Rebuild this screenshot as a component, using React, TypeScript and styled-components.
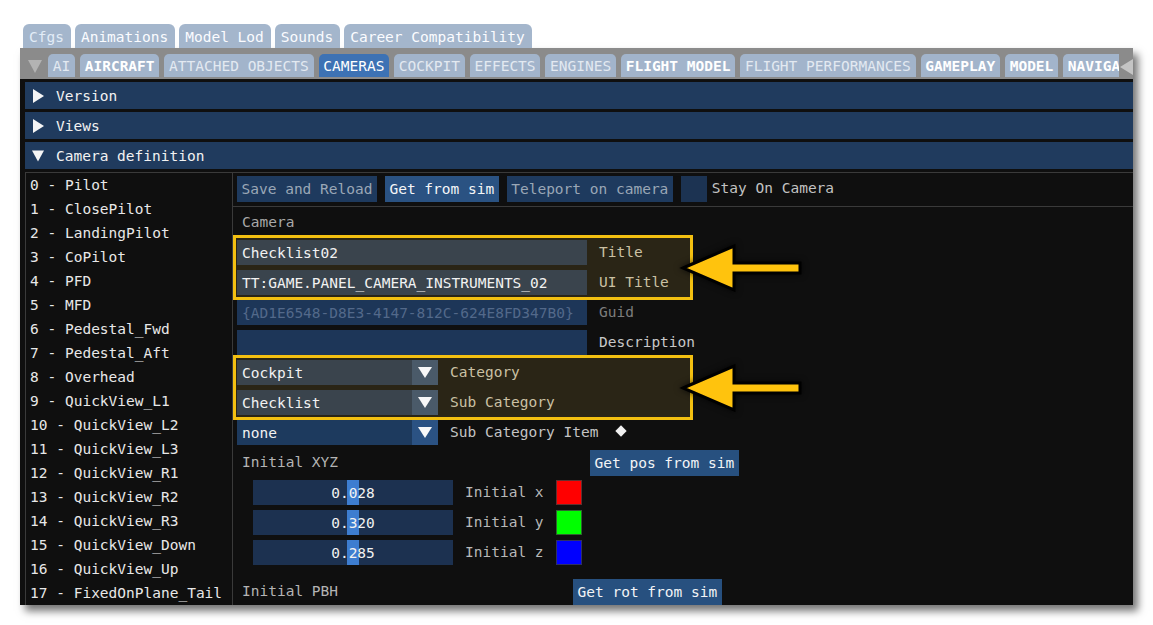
import React from 'react';
import styled, { createGlobalStyle, css } from 'styled-components';

const GlobalStyle = createGlobalStyle`
  html, body {
    margin: 0;
    background: #ffffff;
  }
  body {
    font-family: 'DejaVu Sans Mono', 'Liberation Mono', monospace;
    font-size: 14.5px;
  }
`;

const Page = styled.div`
  width: 1153px;
  height: 625px;
  box-sizing: border-box;
  padding: 24px 0 0 20px;
`;

const TopTabs = styled.div`
  display: flex;
  gap: 4px;
  padding-left: 3px;
  height: 24px;
`;

const TopTab = styled.div<{ $dim?: boolean }>`
  height: 24px;
  line-height: 26px;
  padding: 0 7px 0 6px;
  background: #a4b6cc;
  border-radius: 6px 6px 0 0;
  color: ${({ $dim }) => ($dim ? '#e2ecf7' : '#fbfcff')};
  white-space: nowrap;
`;

const Window = styled.div`
  width: 1113px;
  height: 557px;
  background: #0f0f0f;
  overflow: hidden;
  display: flex;
  flex-direction: column;
  box-shadow: 5px 6px 8px rgba(0, 0, 0, 0.55);
`;

const TabBar = styled.div`
  flex-shrink: 0;
  height: 31px;
  box-sizing: border-box;
  background: #8b8b8b;
  display: flex;
  align-items: flex-start;
  padding: 6px 0 0 8px;
`;

const BarArrow = styled.div`
  width: 14px;
  margin: 6px 6px 0 0;
  display: flex;
`;

const TabStrip = styled.div`
  width: 1071px;
  display: flex;
  gap: 5px;
  overflow: hidden;
`;

const Tab = styled.div<{ $tone: 'dim' | 'bright' | 'active' }>`
  flex-shrink: 0;
  height: 23px;
  line-height: 25px;
  padding: 0 4.75px;
  border-radius: 5px 5px 0 0;
  background: #a2b4cb;
  color: #e3e9f1;
  white-space: nowrap;
  ${({ $tone }) =>
    $tone === 'bright' &&
    css`
      color: #ffffff;
      font-weight: bold;
    `}
  ${({ $tone }) =>
    $tone === 'active' &&
    css`
      background: #3d72b4;
      color: #ffffff;
    `}
`;

const ScrollArrow = styled.div`
  margin: 5px 0 0 1px;
  display: flex;
`;

const Content = styled.div`
  flex: 1;
  min-height: 0;
  display: flex;
  flex-direction: column;
  padding: 3px 0 0 5px;
`;

const Header = styled.div`
  flex-shrink: 0;
  height: 27px;
  margin-bottom: 3px;
  background: #203b5e;
  color: #f2f2f2;
  display: flex;
  align-items: center;
  gap: 12px;
  padding-left: 7px;
`;

const Caret = styled.span`
  width: 12px;
  display: flex;
  justify-content: center;
`;

const Body = styled.div`
  flex: 1;
  min-height: 0;
  display: flex;
  border-top: 1px solid #3a3a3a;
`;

const ListPane = styled.div`
  width: 208px;
  flex-shrink: 0;
  box-sizing: border-box;
  border-left: 1px solid #3a3a3a;
  border-right: 1px solid #3a3a3a;
  padding-left: 4px;
`;

const ListItem = styled.div`
  height: 24px;
  line-height: 25px;
  color: #e8e8e8;
  white-space: nowrap;
`;

const RightPane = styled.div`
  flex: 1;
  display: flex;
  flex-direction: column;
`;

const ButtonRow = styled.div`
  display: flex;
  gap: 8px;
  align-items: center;
  padding: 2px 4px 0;
`;

const Button = styled.div<{ $tone?: 'dim' | 'strong' | 'action' }>`
  height: 26px;
  line-height: 27px;
  padding: 0 4.5px;
  white-space: nowrap;
  background: #1e3a5e;
  color: #9aa7b6;
  ${({ $tone }) =>
    $tone === 'strong' &&
    css`
      background: #2a5282;
      color: #f4f6f8;
    `}
  ${({ $tone }) =>
    $tone === 'action' &&
    css`
      background: #27507f;
      color: #f2f4f6;
    `}
`;

const Checkbox = styled.div`
  width: 26px;
  height: 26px;
  background: #1c3352;
`;

const CheckLabel = styled.span`
  color: #c2c2c2;
  margin-left: -3px;
  line-height: 27px;
`;

const Separator = styled.div`
  height: 1px;
  margin-top: 4px;
  background: #3a3a3a;
`;

const Form = styled.div`
  display: flex;
  flex-direction: column;
  gap: 5px;
  padding: 3px 0 0 4px;
`;

const Row = styled.div<{ $indent?: number; $top?: number }>`
  display: flex;
  align-items: center;
  gap: 12px;
  height: 25px;
  padding-left: ${({ $indent }) => $indent ?? 0}px;
  margin-top: ${({ $top }) => $top ?? 0}px;
`;

const Label = styled.span<{ $color?: string; $w?: number }>`
  color: ${({ $color }) => $color ?? '#c4c4c4'};
  white-space: nowrap;
  line-height: 27px;
  ${({ $w }) =>
    $w !== undefined &&
    css`
      width: ${$w}px;
      flex-shrink: 0;
    `}
`;

const SectionLabel = styled(Label)`
  padding-left: 5px;
`;

const Field = styled.div<{ $bg: string; $fg?: string }>`
  width: 350px;
  height: 25px;
  box-sizing: border-box;
  padding-left: 5px;
  line-height: 27px;
  background: ${({ $bg }) => $bg};
  color: ${({ $fg }) => $fg ?? '#f2f2f2'};
  white-space: nowrap;
  overflow: hidden;
`;

const Combo = styled.div`
  width: 201px;
  height: 25px;
  display: flex;
`;

const ComboValue = styled.div<{ $bg: string }>`
  flex: 1;
  padding-left: 5px;
  line-height: 27px;
  background: ${({ $bg }) => $bg};
  color: #f2f2f2;
`;

const ComboArrow = styled.div<{ $bg: string }>`
  width: 26px;
  background: ${({ $bg }) => $bg};
  display: flex;
  align-items: center;
  justify-content: center;
`;

const Diamond = styled.span`
  width: 8px;
  height: 8px;
  margin: -4px 0 0 7px;
  background: #f0f0f0;
  transform: rotate(45deg);
`;

const Highlight = styled.div`
  position: relative;
  width: 460px;
  box-sizing: border-box;
  margin: -5px 0 -5px -4px;
  padding: 2px 0 2px 1px;
  border: 3px solid #f3c011;
  background: #2a2516;
  display: flex;
  flex-direction: column;
  gap: 5px;
`;

const Pointer = styled.svg`
  position: absolute;
  left: 444px;
  top: 50%;
  transform: translateY(-50%);
  filter: drop-shadow(0 0 3px rgba(0, 0, 0, 0.7));
  overflow: visible;
`;

const Drag = styled.div`
  position: relative;
  width: 200px;
  height: 25px;
  background: #1c3150;
  color: #f2f2f2;
  text-align: center;
  line-height: 27px;
`;

const Grab = styled.div`
  position: absolute;
  top: 0;
  bottom: 0;
  left: 94px;
  width: 12px;
  background: #3d7dd0;
`;

const DragText = styled.span`
  position: relative;
`;

const Swatch = styled.div<{ $color: string }>`
  width: 26px;
  height: 25px;
  box-sizing: border-box;
  background: ${({ $color }) => $color};
  border: 1px solid rgba(60, 60, 60, 0.8);
`;

const Triangle = ({ dir, size, color }: { dir: 'right' | 'down' | 'left'; size: [number, number]; color: string }) => {
  const [w, h] = size;
  const pts =
    dir === 'right'
      ? `0,0 ${w},${h / 2} 0,${h}`
      : dir === 'down'
        ? `0,0 ${w},0 ${w / 2},${h}`
        : `${w},0 0,${h / 2} ${w},${h}`;
  return (
    <svg width={w} height={h} viewBox={`0 0 ${w} ${h}`}>
      <polygon points={pts} fill={color} />
    </svg>
  );
};

const Arrow = () => (
  <Pointer width="124" height="54" viewBox="0 0 124 54">
    <polygon
      points="3,27 54,5 54,22 120,22 120,32 54,32 54,49"
      fill="#ffc30d"
      stroke="#000"
      strokeWidth="3"
    />
  </Pointer>
);

const topTabs = ['Cfgs', 'Animations', 'Model Lod', 'Sounds', 'Career Compatibility'];

const tabs: [string, 'dim' | 'bright' | 'active'][] = [
  ['AI', 'dim'],
  ['AIRCRAFT', 'bright'],
  ['ATTACHED OBJECTS', 'dim'],
  ['CAMERAS', 'active'],
  ['COCKPIT', 'dim'],
  ['EFFECTS', 'dim'],
  ['ENGINES', 'dim'],
  ['FLIGHT MODEL', 'bright'],
  ['FLIGHT PERFORMANCES', 'dim'],
  ['GAMEPLAY', 'bright'],
  ['MODEL', 'bright'],
  ['NAVIGA', 'bright'],
];

const cameras = [
  'Pilot',
  'ClosePilot',
  'LandingPilot',
  'CoPilot',
  'PFD',
  'MFD',
  'Pedestal_Fwd',
  'Pedestal_Aft',
  'Overhead',
  'QuickView_L1',
  'QuickView_L2',
  'QuickView_L3',
  'QuickView_R1',
  'QuickView_R2',
  'QuickView_R3',
  'QuickView_Down',
  'QuickView_Up',
  'FixedOnPlane_Tail',
];

const xyz = [
  ['0.028', 'Initial x', '#ff0000'],
  ['0.320', 'Initial y', '#00ff00'],
  ['0.285', 'Initial z', '#0000ff'],
];

const HL_FIELD = '#3a444d';
const HL_LABEL = '#cbc1a4';
const BLUE_FIELD = '#1d3658';

export default function App() {
  return (
    <Page>
      <GlobalStyle />
      <TopTabs>
        {topTabs.map((t, i) => (
          <TopTab key={t} $dim={i === 0}>
            {t}
          </TopTab>
        ))}
      </TopTabs>
      <Window>
        <TabBar>
          <BarArrow>
            <Triangle dir="down" size={[14, 13]} color="#b3b3b3" />
          </BarArrow>
          <TabStrip>
            {tabs.map(([t, tone]) => (
              <Tab key={t} $tone={tone}>
                {t}
              </Tab>
            ))}
          </TabStrip>
          <ScrollArrow>
            <Triangle dir="left" size={[13, 16]} color="#c4c4c4" />
          </ScrollArrow>
        </TabBar>
        <Content>
          <Header>
            <Caret>
              <Triangle dir="right" size={[11, 14]} color="#f5f5f5" />
            </Caret>
            Version
          </Header>
          <Header>
            <Caret>
              <Triangle dir="right" size={[11, 14]} color="#f5f5f5" />
            </Caret>
            Views
          </Header>
          <Header>
            <Caret>
              <Triangle dir="down" size={[13, 12]} color="#f5f5f5" />
            </Caret>
            Camera definition
          </Header>
          <Body>
            <ListPane>
              {cameras.map((c, i) => (
                <ListItem key={c}>
                  {i} - {c}
                </ListItem>
              ))}
            </ListPane>
            <RightPane>
              <ButtonRow>
                <Button>Save and Reload</Button>
                <Button $tone="strong">Get from sim</Button>
                <Button>Teleport on camera</Button>
                <Checkbox />
                <CheckLabel>Stay On Camera</CheckLabel>
              </ButtonRow>
              <Separator />
              <Form>
                <Row>
                  <SectionLabel $color="#a8a8a8">Camera</SectionLabel>
                </Row>
                <Highlight>
                  <Row>
                    <Field $bg={HL_FIELD}>Checklist02</Field>
                    <Label $color={HL_LABEL}>Title</Label>
                  </Row>
                  <Row>
                    <Field $bg={HL_FIELD}>TT:GAME.PANEL_CAMERA_INSTRUMENTS_02</Field>
                    <Label $color={HL_LABEL}>UI Title</Label>
                  </Row>
                  <Arrow />
                </Highlight>
                <Row>
                  <Field $bg={BLUE_FIELD} $fg="#53698a">
                    {'{AD1E6548-D8E3-4147-812C-624E8FD347B0}'}
                  </Field>
                  <Label $color="#7d7d7d">Guid</Label>
                </Row>
                <Row>
                  <Field $bg={BLUE_FIELD} />
                  <Label $color="#c8c8c8">Description</Label>
                </Row>
                <Highlight>
                  <Row>
                    <Combo>
                      <ComboValue $bg={HL_FIELD}>Cockpit</ComboValue>
                      <ComboArrow $bg="#4a5a69">
                        <Triangle dir="down" size={[14, 11]} color="#f8f8f8" />
                      </ComboArrow>
                    </Combo>
                    <Label $color={HL_LABEL}>Category</Label>
                  </Row>
                  <Row>
                    <Combo>
                      <ComboValue $bg={HL_FIELD}>Checklist</ComboValue>
                      <ComboArrow $bg="#4a5a69">
                        <Triangle dir="down" size={[14, 11]} color="#f8f8f8" />
                      </ComboArrow>
                    </Combo>
                    <Label $color={HL_LABEL}>Sub Category</Label>
                  </Row>
                  <Arrow />
                </Highlight>
                <Row>
                  <Combo>
                    <ComboValue $bg="#1d3a5e">none</ComboValue>
                    <ComboArrow $bg="#2b5283">
                      <Triangle dir="down" size={[14, 11]} color="#f8f8f8" />
                    </ComboArrow>
                  </Combo>
                  <Label $color="#c4c4c4">Sub Category Item</Label>
                  <Diamond />
                </Row>
                <Row>
                  <SectionLabel $color="#b4b4b4" $w={336}>
                    Initial XYZ
                  </SectionLabel>
                  <Button $tone="action">Get pos from sim</Button>
                </Row>
                {xyz.map(([v, l, c]) => (
                  <Row key={l} $indent={16}>
                    <Drag>
                      <Grab />
                      <DragText>{v}</DragText>
                    </Drag>
                    <Label $color="#b8b8b8" $w={79}>
                      {l}
                    </Label>
                    <Swatch $color={c} />
                  </Row>
                ))}
                <Row $top={9}>
                  <SectionLabel $color="#b4b4b4" $w={319}>
                    Initial PBH
                  </SectionLabel>
                  <Button $tone="action">Get rot from sim</Button>
                </Row>
              </Form>
            </RightPane>
          </Body>
        </Content>
      </Window>
    </Page>
  );
}
